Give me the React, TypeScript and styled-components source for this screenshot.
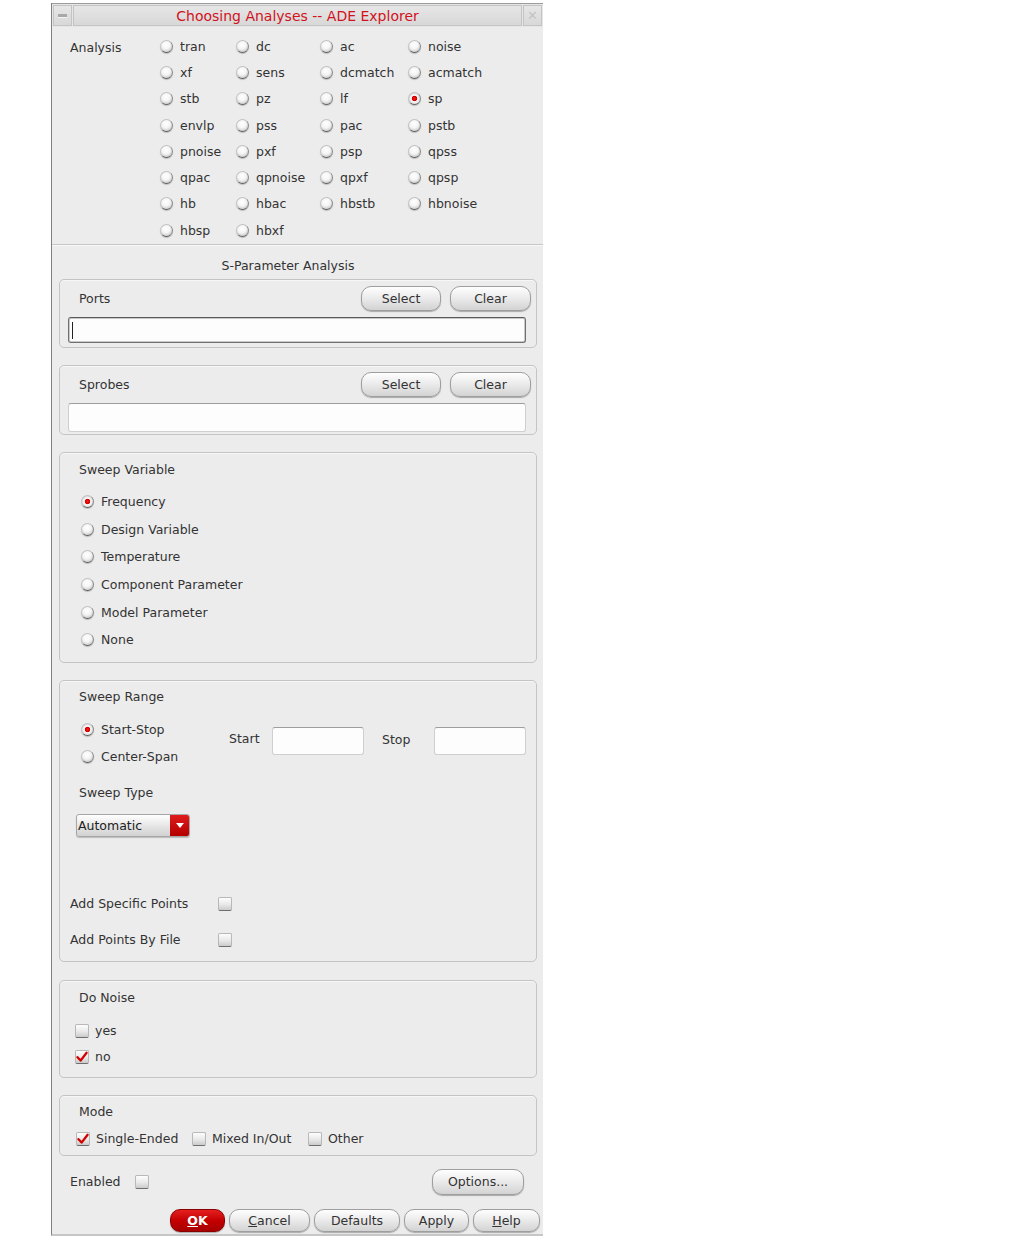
import React from 'react';
import styled, { createGlobalStyle } from 'styled-components';

const GlobalStyle = createGlobalStyle`
	html, body {
		margin: 0;
		padding: 0;
		background: #ffffff;
	}
	body {
		font-family: "DejaVu Sans", "Liberation Sans", sans-serif;
		font-size: 12.5px;
		color: #333333;
	}
`;

const Page = styled.div`
	padding: 3px 0 0 51px;
`;

const Window = styled.div`
	width: 492px;
	box-sizing: border-box;
	background: #ececec;
	border-left: 1px solid #808080;
	border-bottom: 2px solid #c6c6c6;
	display: flex;
	flex-direction: column;
`;

const TitleBar = styled.div`
	display: flex;
	gap: 1px;
	height: 24px;
	box-sizing: border-box;
	padding: 1px;
	border-top: 1px solid #9c9c9c;
	background: #e6e6e6;
`;

const TitleBox = styled.div<{ $w?: number }>`
	${(p) => (p.$w ? `width: ${p.$w}px; flex: none;` : 'flex: 1;')}
	box-sizing: border-box;
	border: 1px solid #c4c4c4;
	background: linear-gradient(#e6e6e6, #d8d8d8);
	display: flex;
	align-items: center;
	justify-content: center;
	color: #d2121c;
	font-size: 14px;
`;

const MinDash = styled.span`
	width: 9px;
	height: 3px;
	background: #a8a8a8;
	border-bottom: 1px solid #f4f4f4;
`;

const CloseGlyph = styled.span`
	color: #c4c4c4;
	font-size: 13px;
	line-height: 1;
`;

const AnalysisSection = styled.div`
	display: flex;
	padding: 6px 0 0 18px;
	height: 217px;
	box-sizing: border-box;
`;

const SideLabel = styled.div<{ $w: number }>`
	width: ${(p) => p.$w}px;
	flex: none;
	line-height: 26px;
	margin-top: 2px;
`;

const AnalysisGrid = styled.div`
	display: grid;
	grid-template-columns: 76px 84px 88px 80px;
	grid-auto-rows: 26.3px;
`;

const RadioItem = styled.label`
	display: flex;
	align-items: center;
	gap: 7px;
	white-space: nowrap;
`;

const RadioDot = styled.span<{ $on?: boolean }>`
	width: 13px;
	height: 13px;
	flex: none;
	box-sizing: border-box;
	border-radius: 50%;
	border: 1px solid #c2c2c2;
	border-bottom-color: #5e5e5e;
	border-right-color: #8a8a8a;
	background: ${(p) =>
		p.$on
			? 'radial-gradient(circle at 50% 50%, #ff1a1a 0, #d00000 2.3px, #fafafa 3.1px, #e8e8e8 60%, #a0a0a0 100%)'
			: 'radial-gradient(circle at 45% 35%, #ffffff 0, #f4f4f4 45%, #cdcdcd 75%, #8e8e8e 100%)'};
	box-shadow: 0 1px 1px rgba(0, 0, 0, 0.2);
`;

const Separator = styled.div`
	border-top: 1px solid #c6c6c6;
	border-bottom: 1px solid #f8f8f8;
`;

const SectionTitle = styled.div`
	height: 33px;
	box-sizing: border-box;
	padding: 12px 19px 0 0;
	line-height: 16px;
	text-align: center;
`;

const Group = styled.div<{ $pad?: string }>`
	margin: 0 6px 0 7px;
	border: 1px solid #c4c4c4;
	border-radius: 5px;
	box-shadow: inset 0 1px 0 #f7f7f7;
	padding: ${(p) => p.$pad ?? '0'};
	display: flex;
	flex-direction: column;
`;

const GroupGap = styled.div<{ $h?: number }>`
	height: ${(p) => p.$h ?? 17}px;
	flex: none;
`;

const GroupHeader = styled.div`
	display: flex;
	align-items: center;
	height: 25px;
	gap: 9px;
`;

const GroupLabel = styled.div<{ $top?: number; $left?: number }>`
	padding: ${(p) => p.$top ?? 7}px 0 0 ${(p) => p.$left ?? 19}px;
	line-height: 18px;
`;

const HeaderLabel = styled.div`
	flex: 1;
	padding-left: 11px;
`;

const PillButton = styled.button<{ $w: number; $h?: number; $primary?: boolean }>`
	width: ${(p) => p.$w}px;
	height: ${(p) => p.$h ?? 25}px;
	flex: none;
	padding: 0;
	border-radius: 10px;
	border: 1px solid ${(p) => (p.$primary ? '#8a0000' : '#9e9e9e')};
	background: ${(p) =>
		p.$primary
			? 'linear-gradient(#e42020, #c40000 50%, #a80000)'
			: 'linear-gradient(#fefefe, #ececec 45%, #d3d3d3)'};
	box-shadow: 0 1px 1px rgba(0, 0, 0, 0.28);
	font-family: inherit;
	font-size: 12.5px;
	font-weight: ${(p) => (p.$primary ? 'bold' : 'normal')};
	color: ${(p) => (p.$primary ? '#ffffff' : '#333333')};
`;

const FieldSlot = styled.div<{ $top: number }>`
	margin-top: ${(p) => p.$top}px;
`;

const FieldInput = styled.div<{ $w: number; $h: number; $focused?: boolean }>`
	width: ${(p) => p.$w}px;
	height: ${(p) => p.$h}px;
	flex: none;
	box-sizing: border-box;
	background: #fdfdfd;
	border-radius: 3px;
	border: 1px solid ${(p) => (p.$focused ? '#707070' : '#cfcfcf')};
	border-top-color: ${(p) => (p.$focused ? '#5a5a5a' : '#9d9d9d')};
	box-shadow: ${(p) => (p.$focused ? 'inset 0 0 0 1px #c8c8c8' : 'none')};
	display: flex;
	align-items: center;
	padding-left: 3px;
`;

const Caret = styled.span`
	width: 1px;
	height: 17px;
	background: #222;
`;

const RadioList = styled.div<{ $rowH: number; $top: number; $left: number }>`
	display: grid;
	grid-auto-rows: ${(p) => p.$rowH}px;
	margin-top: ${(p) => p.$top}px;
	padding-left: ${(p) => p.$left}px;
`;

const RangeRow = styled.div`
	display: flex;
	margin-top: 10px;
`;

const RangeRadios = styled.div`
	width: 169px;
	flex: none;
	box-sizing: border-box;
	padding-left: 21px;
	display: grid;
	grid-auto-rows: 27px;
`;

const InlineLabel = styled.div<{ $w: number; $top: number; $left?: number }>`
	width: ${(p) => p.$w}px;
	flex: none;
	margin-top: ${(p) => p.$top}px;
	margin-left: ${(p) => p.$left ?? 0}px;
	line-height: 18px;
`;

const Dropdown = styled.div`
	display: flex;
	width: 114px;
	height: 23px;
	box-sizing: border-box;
	margin: 12px 0 0 16px;
	border: 1px solid #a6a6a6;
	border-radius: 3px;
	overflow: hidden;
	background: linear-gradient(#ffffff, #e2e2e2 60%, #d2d2d2);
	box-shadow: 0 1px 1px rgba(0, 0, 0, 0.2);
`;

const DropText = styled.div`
	flex: 1;
	padding-left: 1px;
	line-height: 21px;
	color: #222;
`;

const DropArrow = styled.div`
	width: 19px;
	background: linear-gradient(#e01c1c, #b40000);
	display: flex;
	align-items: center;
	justify-content: center;
	&::after {
		content: '';
		border-left: 4px solid transparent;
		border-right: 4px solid transparent;
		border-top: 5px solid #ffffff;
	}
`;

const CheckRow = styled.div<{ $top: number }>`
	display: flex;
	align-items: center;
	height: 18px;
	margin-top: ${(p) => p.$top}px;
	padding-left: 10px;
`;

const RowLabel = styled.span<{ $w: number }>`
	width: ${(p) => p.$w}px;
	flex: none;
`;

const CheckItem = styled.label<{ $w?: number; $h?: number }>`
	display: flex;
	align-items: center;
	gap: 6px;
	height: ${(p) => p.$h ?? 26}px;
	${(p) => (p.$w ? `width: ${p.$w}px;` : '')}
	flex: none;
	white-space: nowrap;
`;

const CheckBox = styled.span`
	width: 14px;
	height: 14px;
	flex: none;
	box-sizing: border-box;
	border-radius: 2px;
	border: 1px solid #b8b8b8;
	border-bottom-color: #6e6e6e;
	background: linear-gradient(#fdfdfd, #e8e8e8 55%, #cbcbcb);
	display: flex;
	align-items: center;
	justify-content: center;
`;

const NoiseList = styled.div`
	margin-top: 11px;
	padding-left: 15px;
	display: flex;
	flex-direction: column;
`;

const ModeRow = styled.div`
	display: flex;
	margin-top: 7px;
	padding-left: 16px;
`;

const EnabledRow = styled.div`
	display: flex;
	align-items: center;
	height: 26px;
	margin-top: 13px;
	padding: 0 19px 0 18px;
`;

const Spacer = styled.div`
	flex: 1;
`;

const FooterRow = styled.div`
	display: flex;
	justify-content: flex-end;
	gap: 4px;
	margin-top: 14px;
	padding: 0 3px 2px 0;
`;

const Check = ({ on }: { on?: boolean }) => (
	<CheckBox>
		{on && (
			<svg width="12" height="12" viewBox="0 0 12 12">
				<path d="M1.5 6.2 L4.6 9.6 L10.6 1.8" fill="none" stroke="#d40000" strokeWidth="2.3" strokeLinecap="round" strokeLinejoin="round" />
			</svg>
		)}
	</CheckBox>
);

const Radio = ({ label, on }: { label: string; on?: boolean }) => (
	<RadioItem>
		<RadioDot $on={on} />
		{label}
	</RadioItem>
);

const analyses = [
	'tran', 'dc', 'ac', 'noise',
	'xf', 'sens', 'dcmatch', 'acmatch',
	'stb', 'pz', 'lf', 'sp',
	'envlp', 'pss', 'pac', 'pstb',
	'pnoise', 'pxf', 'psp', 'qpss',
	'qpac', 'qpnoise', 'qpxf', 'qpsp',
	'hb', 'hbac', 'hbstb', 'hbnoise',
	'hbsp', 'hbxf',
];

const sweepVars = ['Frequency', 'Design Variable', 'Temperature', 'Component Parameter', 'Model Parameter', 'None'];

const App = () => {
	return (
		<Page>
			<GlobalStyle />
			<Window>
				<TitleBar>
					<TitleBox $w={19}>
						<MinDash />
					</TitleBox>
					<TitleBox>Choosing Analyses -- ADE Explorer</TitleBox>
					<TitleBox $w={19}>
						<CloseGlyph>✕</CloseGlyph>
					</TitleBox>
				</TitleBar>

				<AnalysisSection>
					<SideLabel $w={90}>Analysis</SideLabel>
					<AnalysisGrid>
						{analyses.map((a) => (
							<Radio key={a} label={a} on={a === 'sp'} />
						))}
					</AnalysisGrid>
				</AnalysisSection>
				<Separator />

				<SectionTitle>S-Parameter Analysis</SectionTitle>

				<Group $pad="6px 5px 4px 8px">
					<GroupHeader>
						<HeaderLabel>Ports</HeaderLabel>
						<PillButton $w={80}>Select</PillButton>
						<PillButton $w={81}>Clear</PillButton>
					</GroupHeader>
					<FieldSlot $top={6}>
						<FieldInput $w={458} $h={26} $focused>
							<Caret />
						</FieldInput>
					</FieldSlot>
				</Group>
				<GroupGap />

				<Group $pad="6px 5px 2px 8px">
					<GroupHeader>
						<HeaderLabel>Sprobes</HeaderLabel>
						<PillButton $w={80}>Select</PillButton>
						<PillButton $w={81}>Clear</PillButton>
					</GroupHeader>
					<FieldSlot $top={6}>
						<FieldInput $w={458} $h={29} />
					</FieldSlot>
				</Group>
				<GroupGap />

				<Group $pad="0 0 8px 0">
					<GroupLabel $top={8}>Sweep Variable</GroupLabel>
					<RadioList $rowH={27.6} $top={9} $left={21}>
						{sweepVars.map((v) => (
							<Radio key={v} label={v} on={v === 'Frequency'} />
						))}
					</RadioList>
				</Group>
				<GroupGap />

				<Group $pad="0 0 12px 0">
					<GroupLabel>Sweep Range</GroupLabel>
					<RangeRow>
						<RangeRadios>
							<Radio label="Start-Stop" on />
							<Radio label="Center-Span" />
						</RangeRadios>
						<InlineLabel $w={43} $top={14}>Start</InlineLabel>
						<FieldSlot $top={11}>
							<FieldInput $w={92} $h={28} />
						</FieldSlot>
						<InlineLabel $w={52} $top={15} $left={18}>Stop</InlineLabel>
						<FieldSlot $top={11}>
							<FieldInput $w={92} $h={28} />
						</FieldSlot>
					</RangeRow>
					<GroupLabel $top={14}>Sweep Type</GroupLabel>
					<Dropdown>
						<DropText>Automatic</DropText>
						<DropArrow />
					</Dropdown>
					<CheckRow $top={58}>
						<RowLabel $w={148}>Add Specific Points</RowLabel>
						<Check />
					</CheckRow>
					<CheckRow $top={18}>
						<RowLabel $w={148}>Add Points By File</RowLabel>
						<Check />
					</CheckRow>
				</Group>
				<GroupGap $h={18} />

				<Group $pad="0 0 7px 0">
					<GroupLabel $top={8}>Do Noise</GroupLabel>
					<NoiseList>
						<CheckItem>
							<Check />
							yes
						</CheckItem>
						<CheckItem>
							<Check on />
							no
						</CheckItem>
					</NoiseList>
				</Group>
				<GroupGap />

				<Group $pad="0 0 5px 0">
					<GroupLabel>Mode</GroupLabel>
					<ModeRow>
						<CheckItem $w={116} $h={22}>
							<Check on />
							Single-Ended
						</CheckItem>
						<CheckItem $w={116} $h={22}>
							<Check />
							Mixed In/Out
						</CheckItem>
						<CheckItem $h={22}>
							<Check />
							Other
						</CheckItem>
					</ModeRow>
				</Group>

				<EnabledRow>
					<RowLabel $w={65}>Enabled</RowLabel>
					<Check />
					<Spacer />
					<PillButton $w={92} $h={26}>Options...</PillButton>
				</EnabledRow>

				<FooterRow>
					<PillButton $w={55} $h={23} $primary>
						<u>O</u>K
					</PillButton>
					<PillButton $w={81} $h={23}>
						<u>C</u>ancel
					</PillButton>
					<PillButton $w={86} $h={23}>Defaults</PillButton>
					<PillButton $w={65} $h={23}>Apply</PillButton>
					<PillButton $w={67} $h={23}>
						<u>H</u>elp
					</PillButton>
				</FooterRow>
			</Window>
		</Page>
	);
};

export default App;
